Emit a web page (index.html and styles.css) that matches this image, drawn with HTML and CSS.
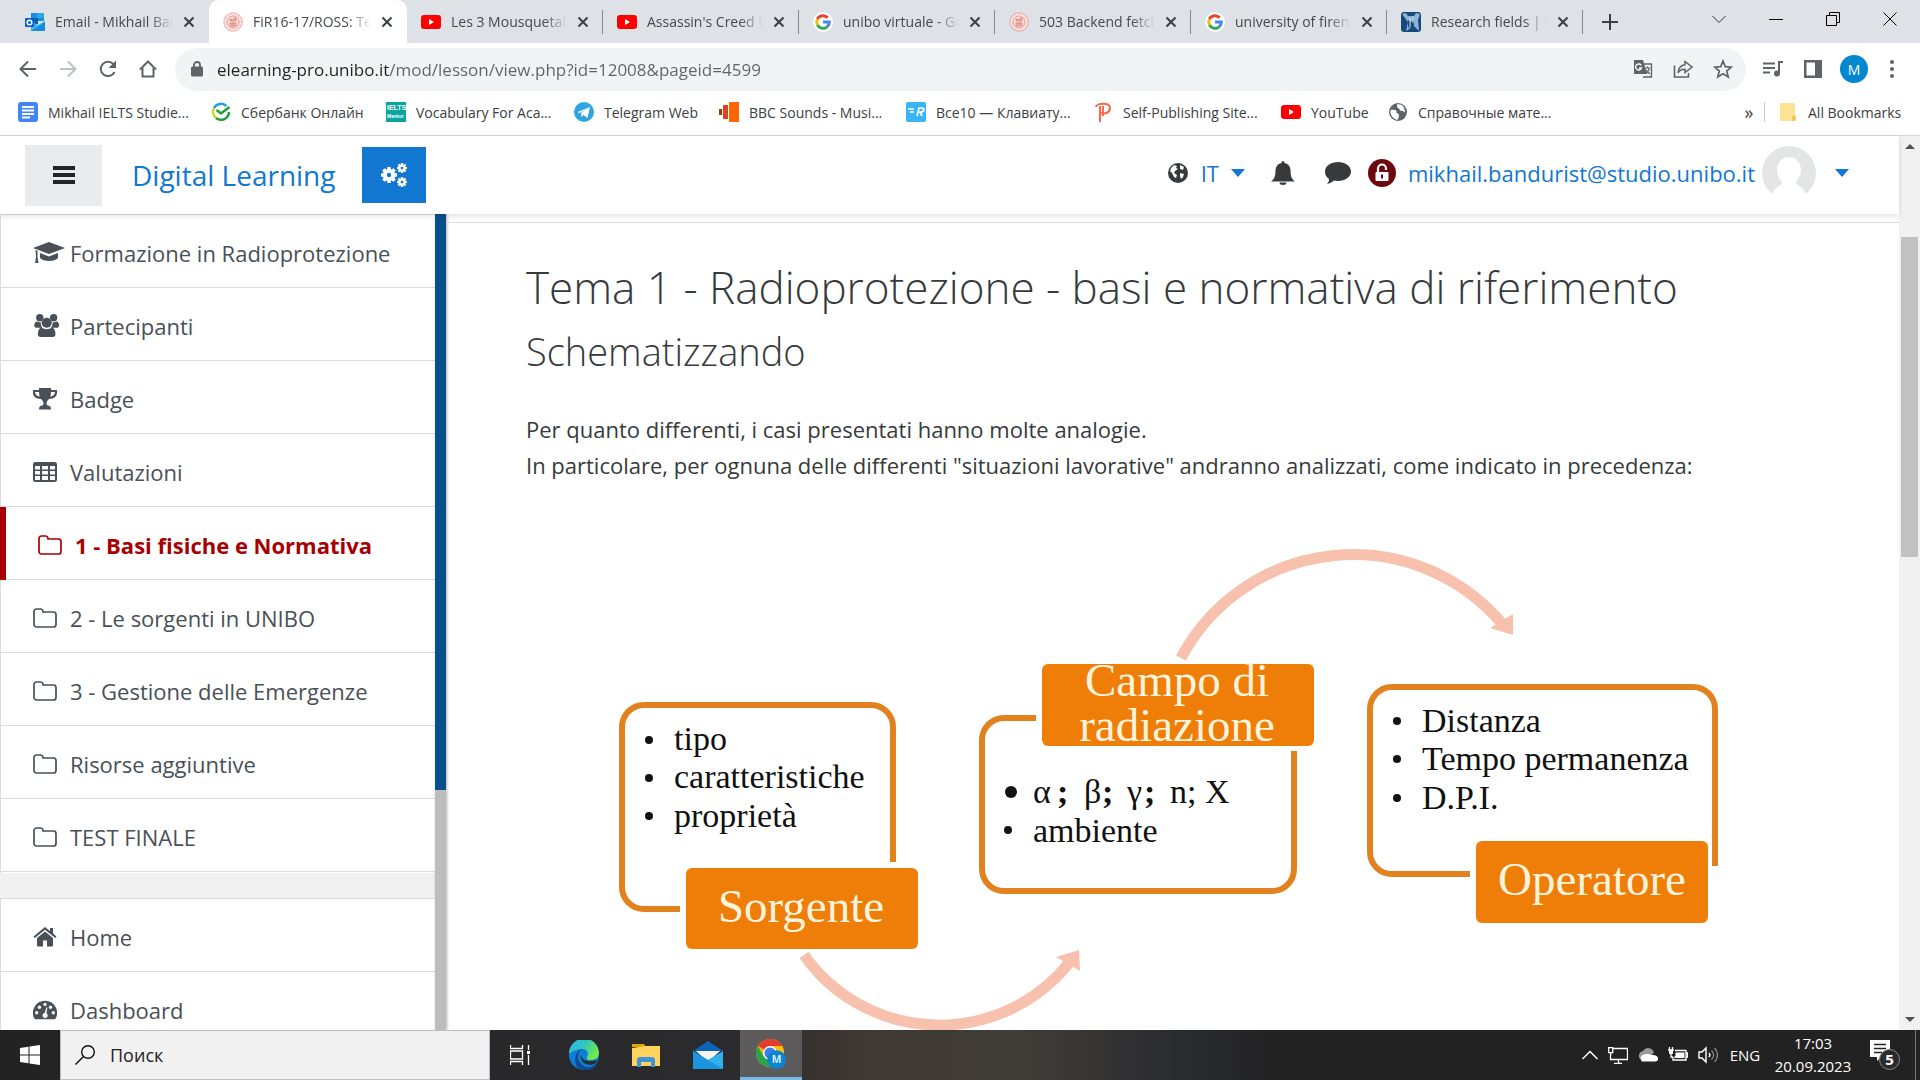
FILE: index.html
```html
<!DOCTYPE html>
<html lang="it">
<head>
<meta charset="utf-8">
<title>FiR16-17/ROSS: Tema 1</title>
<link rel="stylesheet" href="styles.css">
</head>
<body>
<svg class="defs" aria-hidden="true">
  <symbol id="x" viewBox="0 0 12 12"><path d="M1.500 1.500l9 9M10.500 1.500l-9 9" stroke="#3c4043" stroke-width="2" fill="none"/></symbol>
  <symbol id="youtube" viewBox="0 0 20 20"><rect y="3" width="20" height="14" rx="3" fill="#f00"/><path d="M8 7l5 3-5 3z" fill="#fff"/></symbol>
  <symbol id="google" viewBox="0 0 20 20"><circle cx="10" cy="10" r="10" fill="#fff"/><g fill="none" stroke-width="3"><path d="M14.700 5.800A6.300 6.300 0 0 0 4.400 7.200" stroke="#ea4335"/><path d="M4.400 7.200a6.300 6.300 0 0 0 0 5.600" stroke="#fbbc05"/><path d="M4.400 12.800a6.300 6.300 0 0 0 9.800 2" stroke="#34a853"/><path d="M10 10h6.300a6.300 6.300 0 0 1-2.100 4.800" stroke="#4285f4"/></g></symbol>
  <symbol id="seal" viewBox="0 0 20 20"><circle cx="10" cy="10" r="9" fill="#fbe3e0" stroke="#eba9a2" stroke-width="1.500" stroke-dasharray="1.500 .7"/><circle cx="10" cy="10" r="6" fill="none" stroke="#e79a93"/><path d="M7 7h2v2H7zM11 6h2v3h-2zM7 11h6v3H7zM10 7v7" fill="#efb5b0" stroke="#de7e76" stroke-width=".8"/></symbol>
  <symbol id="folder" viewBox="0 0 24 20"><path d="M1 3.500A2.500 2.500 0 0 1 3.500 1h4A2.500 2.500 0 0 1 10 3.500V4h10.500A2.500 2.500 0 0 1 23 6.500v10a2.500 2.500 0 0 1-2.500 2.500h-17A2.500 2.500 0 0 1 1 16.500z" fill="none" stroke="currentColor" stroke-width="1.700"/></symbol>
  <symbol id="caret" viewBox="0 0 14 8"><path d="M0 0h14L7 8z" fill="currentColor"/></symbol>
  <symbol id="gear" viewBox="-10 -10 20 20"><circle r="5" fill="none" stroke="currentColor" stroke-width="4.500"/><g fill="currentColor"><path id="tooth" d="M-2-10h4l.7 4h-5.400zM-2 10h4l.7-4h-5.400z"/><use href="#tooth" transform="rotate(45)"/><use href="#tooth" transform="rotate(90)"/><use href="#tooth" transform="rotate(135)"/></g></symbol>
</svg>

<header class="browser">
  <div class="tabstrip">
    <div class="tabs">
      <div class="tab first"><svg class="fav" viewBox="0 0 20 20"><path d="M6 1h13v8H6z" fill="#1490df"/><path d="M12 1h7v5h-7z" fill="#28a8ea"/><path d="M6 6h7v6H6z" fill="#0f5ea8"/><path d="M6 19V9l7 4 7-4v10z" fill="#35b8f1"/><path d="M6 19l14-9v9z" fill="#1a8ad8"/><rect y="6" width="9" height="9" rx="1" fill="#0a62c0"/><circle cx="4.500" cy="10.500" r="2.300" fill="none" stroke="#fff" stroke-width="1.500"/></svg><span class="tab-title">Email - Mikhail Bandurist</span><button class="close" aria-label="Chiudi"><svg><use href="#x"/></svg></button></div>
      <div class="tab active"><svg class="fav"><use href="#seal"/></svg><span class="tab-title">FiR16-17/ROSS: Tema 1</span><button class="close" aria-label="Chiudi"><svg><use href="#x"/></svg></button></div>
      <div class="tab"><svg class="fav"><use href="#youtube"/></svg><span class="tab-title">Les 3 Mousquetaires</span><button class="close" aria-label="Chiudi"><svg><use href="#x"/></svg></button></div>
      <div class="tab"><svg class="fav"><use href="#youtube"/></svg><span class="tab-title">Assassin's Creed Unity</span><button class="close" aria-label="Chiudi"><svg><use href="#x"/></svg></button></div>
      <div class="tab"><svg class="fav"><use href="#google"/></svg><span class="tab-title">unibo virtuale - Google</span><button class="close" aria-label="Chiudi"><svg><use href="#x"/></svg></button></div>
      <div class="tab"><svg class="fav"><use href="#seal"/></svg><span class="tab-title">503 Backend fetch failed</span><button class="close" aria-label="Chiudi"><svg><use href="#x"/></svg></button></div>
      <div class="tab"><svg class="fav"><use href="#google"/></svg><span class="tab-title">university of firenze</span><button class="close" aria-label="Chiudi"><svg><use href="#x"/></svg></button></div>
      <div class="tab"><svg class="fav" viewBox="0 0 20 20"><rect width="20" height="20" rx="3" fill="#17497c"/><path d="M1 2l4-1 2 3h6l2-3 4 1-2 6 1 11-5-5-8 5 2-9z" fill="#8fb4d3"/><path d="M7 8l3 2 3-2v6l-3 2-3-1z" fill="#17497c"/><path d="M9 6v9M12 5v6" stroke="#d4e5f2"/></svg><span class="tab-title">Research fields | Research</span><button class="close" aria-label="Chiudi"><svg><use href="#x"/></svg></button></div>
    </div>
    <button class="newtab" aria-label="Nuova scheda"><svg viewBox="0 0 16 16"><path d="M8 0v16M0 8h16" stroke="#3c4043" stroke-width="2"/></svg></button>
    <div class="window-buttons">
      <button aria-label="Cerca schede"><svg viewBox="0 0 14 14"><path d="M.5 4L7 10.500 13.500 4" fill="none" stroke="#333"/></svg></button>
      <button aria-label="Riduci"><svg viewBox="0 0 14 14"><path d="M0 7.500h14" stroke="#000"/></svg></button>
      <button aria-label="Ripristina"><svg viewBox="0 0 14 14"><path d="M.5 3.500h10v10H.5zM3.500 3V.5h10v10H11" fill="none" stroke="#000"/></svg></button>
      <button aria-label="Chiudi finestra"><svg viewBox="0 0 14 14"><path d="M.5.5l13 13M13.500.5l-13 13" stroke="#000"/></svg></button>
    </div>
  </div>

  <div class="toolbar">
    <button class="nav" aria-label="Indietro"><svg viewBox="0 0 20 20"><path d="M18 10H3M10 2.500L2.500 10l7.500 7.500" fill="none" stroke="#5f6368" stroke-width="2"/></svg></button>
    <button class="nav" aria-label="Avanti"><svg viewBox="0 0 20 20"><path d="M2 10h15M10 2.500l7.500 7.500-7.500 7.500" fill="none" stroke="#bdc1c6" stroke-width="2"/></svg></button>
    <button class="nav" aria-label="Ricarica"><svg viewBox="0 0 20 20"><path d="M16.500 13A7.200 7.200 0 1 1 15.500 5.200" fill="none" stroke="#5f6368" stroke-width="2"/><path d="M18 1.500V9h-7.500z" fill="#5f6368"/></svg></button>
    <button class="nav" aria-label="Pagina iniziale"><svg viewBox="0 0 20 20"><path d="M2 10.500l8-8 8 8M4.500 9v8.500h11V9" fill="none" stroke="#5f6368" stroke-width="2"/></svg></button>
    <div class="omnibox">
      <svg class="lock" viewBox="0 0 12 16"><rect y="5.500" width="12" height="10" rx="1.500" fill="#5f6368"/><path d="M3 6V4a3 3 0 0 1 6 0v2" fill="none" stroke="#5f6368" stroke-width="1.800"/></svg>
      <input class="url" aria-label="Indirizzo" value="elearning-pro.unibo.it/mod/lesson/view.php?id=12008&amp;pageid=4599">
      <button class="omni-btn" aria-label="Traduci"><svg viewBox="0 0 20 20"><path d="M8 5h10.500v13H10" fill="none" stroke="#5f6368" stroke-width="1.300"/><path d="M1 1h9l4 14H1z" fill="#5f6368"/><path d="M8.300 6.500A3 3 0 1 0 8.500 9H6" fill="none" stroke="#fff" stroke-width="1.400"/><path d="M11.500 9h6M14.500 7.500V9M12.500 14.500c2-1 3.500-3 4-5.500M13 11l4 4" fill="none" stroke="#5f6368" stroke-width="1.200"/></svg></button>
      <button class="omni-btn" aria-label="Condividi"><svg viewBox="0 0 20 20"><path d="M1.500 6.500v11.500h14v-4" fill="none" stroke="#5f6368" stroke-width="1.600"/><path d="M12 2.500l7 5.500-7 5.500v-3.200c-3.500 0-5.500 1-7 3.500.5-4.500 3-7.500 7-8z" fill="none" stroke="#5f6368" stroke-width="1.500"/></svg></button>
      <button class="omni-btn" aria-label="Preferiti"><svg viewBox="0 0 20 20"><path d="M10 2l2.300 5.600 6 .5-4.600 3.900 1.500 5.900L10 14.700l-5.200 3.200L6.300 12 1.700 8.100l6-.5z" fill="none" stroke="#5f6368" stroke-width="1.700"/></svg></button>
    </div>
    <div class="actions">
      <button aria-label="Contenuti multimediali"><svg viewBox="0 0 20 20"><path d="M0 4.500h12M0 9h12M0 13.500h7" stroke="#5f6368" stroke-width="2"/><path d="M20 3h-4v11" fill="none" stroke="#5f6368" stroke-width="2"/><circle cx="14" cy="14.500" r="3" fill="#5f6368"/></svg></button>
      <button aria-label="Pannello laterale"><svg viewBox="0 0 20 20"><path d="M1 1h18v18H1zM3.500 3.500v13H12v-13z" fill="#5f6368" fill-rule="evenodd"/></svg></button>
      <button class="profile">M</button>
      <button aria-label="Menu"><svg viewBox="0 0 20 20" fill="#5f6368"><circle cx="10" cy="3" r="2"/><circle cx="10" cy="10" r="2"/><circle cx="10" cy="17" r="2"/></svg></button>
    </div>
  </div>

  <nav class="bookmarks">
    <a href="#"><svg viewBox="0 0 20 20"><rect width="20" height="20" rx="3" fill="#4285f4"/><path d="M4 5h12M4 8.500h12M4 12h12M4 15.500h8" stroke="#fff" stroke-width="1.800"/></svg>Mikhail IELTS Studie...</a>
    <a href="#"><svg viewBox="0 0 20 20"><g fill="none" stroke-width="2.500"><path d="M15.500 4A8 8 0 0 0 3 6" stroke="#1f9fe8"/><path d="M3 6a8 8 0 0 0 2 10" stroke="#b8dc26"/><path d="M5 16a8 8 0 0 0 13-6" stroke="#21a038"/></g><path d="M5.500 8l4.500 3.500L18.500 5" fill="none" stroke="#21a038" stroke-width="2.500"/></svg>Сбербанк Онлайн</a>
    <a href="#"><svg viewBox="0 0 20 20"><rect width="20" height="20" fill="#0ba5a0"/><text x="1" y="8" class="tiny">IELTS</text><text x="1" y="16" class="tiny small">Mentor</text></svg>Vocabulary For Aca...</a>
    <a href="#"><svg viewBox="0 0 20 20"><circle cx="10" cy="10" r="10" fill="#2ca5e0"/><path d="M3.500 10L16 5l-2.500 11-4-3-2 2-.5-4 6-4-7.500 4z" fill="#fff"/></svg>Telegram Web</a>
    <a href="#"><svg viewBox="0 0 20 20"><path d="M0 7h3v6H0z" fill="#a7391a"/><path d="M4 3h5v14H4z" fill="#d8481b"/><path d="M10 0h10v20H10z" fill="#ff6600"/></svg>BBC Sounds - Musi...</a>
    <a href="#"><svg viewBox="0 0 20 20"><rect width="20" height="20" rx="2" fill="#3ab3f7"/><path d="M2 7h6M4 10h4M11 14l2-8h3c3 0 2 4-1 4h-3M14 10l2 4" fill="none" stroke="#fff" stroke-width="1.700"/></svg>Все10 — Клавиату...</a>
    <a href="#"><svg viewBox="0 0 20 20"><path d="M3 5c0-4 14-5 14 1 0 5-5 6-9 5M7 4v16M10 4v10" fill="none" stroke="#f96849" stroke-width="2"/></svg>Self-Publishing Site...</a>
    <a href="#"><svg><use href="#youtube"/></svg>YouTube</a>
    <a href="#"><svg viewBox="0 0 20 20"><circle cx="10" cy="10" r="9" fill="#5f6368"/><path d="M2.500 8c4-1 7 0 6 3 3 0 3 4 1 7-4-1-8-5-7-10zM9 2.500c6-1 8 4 8 8-2-2-3-1-5-2 0-2-4-3-3-6z" fill="#fff"/></svg>Справочные мате...</a>
    <button class="more" aria-label="Altri preferiti">»</button>
    <a class="all" href="#"><svg viewBox="0 0 16 20"><path d="M0 3a2 2 0 0 1 2-2h11a2 2 0 0 1 2 2v10l1 2v3l-1 1H2a2 2 0 0 1-2-2z" fill="#fde293"/><path d="M12 19v-5l3-1 1 2v3l-1 1z" fill="#f0cb58"/></svg>All Bookmarks</a>
  </nav>
</header>

<div class="page">
  <div class="site">
    <header class="site-header">
      <button class="hamburger" aria-label="Menu laterale"><svg viewBox="0 0 22 18"><path d="M0 2h22M0 9h22M0 16h22" stroke="#212529" stroke-width="4"/></svg></button>
      <a class="brand" href="#">Digital Learning</a>
      <button class="settings" aria-label="Impostazioni"><svg viewBox="0 0 26 24"><use href="#gear" x="0" y="4" width="16" height="16"/><use href="#gear" x="16" y="0" width="10" height="10"/><use href="#gear" x="16" y="14" width="10" height="10"/></svg></button>
      <div class="user">
        <a class="lang" href="#"><svg class="globe" viewBox="0 0 20 20"><circle cx="10" cy="10" r="10" fill="#373a3c"/><path d="M3 5l3-3 3 1-1 2 2 1-3 2-1 2 3 2-1 3-2-1-2-4-2-2zM12 2l4 2-1 3-3-1zM12 10l4 1-1 3-2 2-1-3z" fill="#fff"/></svg>IT<svg class="caret"><use href="#caret"/></svg></a>
        <button class="bell" aria-label="Notifiche"><svg viewBox="0 0 24 24"><path d="M12 0c1 0 1.500 1 1.500 2 4 .8 6 4 6 7.500 0 6 1.500 9 4.500 11H0c3-2 4.500-5 4.500-11 0-3.500 2-6.700 6-7.500 0-1 .5-2 1.500-2zM8.500 21.500h7a3.500 2.500 0 0 1-7 0z" fill="#373a3c"/></svg></button>
        <button class="chat" aria-label="Messaggi"><svg viewBox="0 0 26 22"><path d="M13 0c7 0 13 4 13 9.500S20 19 13 19c-1.500 0-2.500 0-4-.4C7 20.500 4.500 21.500 2 22c1.500-1.500 2-3 2-5-2.500-1.700-4-4-4-7.500C0 4 6 0 13 0z" fill="#373a3c"/></svg></button>
        <svg class="unlock" viewBox="0 0 28 28"><circle cx="14" cy="14" r="14" fill="#6e0a0d"/><rect x="7.500" y="13" width="13" height="9" rx="1" fill="#fff"/><path d="M10 13V9.500a4 4 0 0 1 8 0V11" fill="none" stroke="#fff" stroke-width="2.200"/><path d="M14 15.500v4" stroke="#6e0a0d" stroke-width="2"/></svg>
        <a class="account" href="#">mikhail.bandurist@studio.unibo.it<svg class="avatar" viewBox="0 0 54 54"><circle cx="27" cy="27" r="27" fill="#e4e5e7"/><path d="M27 11c7 0 12 6 12 13 0 6-3 9-5 12 0 4 7 4 10 12v6H10v-6c3-8 10-8 10-12-2-3-5-6-5-12 0-7 5-13 12-13z" fill="#fff"/></svg><svg class="caret"><use href="#caret"/></svg></a>
      </div>
    </header>
    <div class="columns">
      <nav class="drawer">
        <ul class="menu">
          <li><a href="#"><svg class="ico wide" viewBox="0 0 32 22"><path d="M16 0l16 6-16 6L0 6zM7 11l9 3.500 9-3.500v5c-3 4-15 4-18 0zM2.500 8l2 .7V15l1 6H2l1-6z" fill="currentColor"/></svg>Formazione in Radioprotezione</a></li>
          <li><a href="#"><svg class="ico wide" viewBox="0 0 32 26" fill="currentColor"><circle cx="6" cy="4" r="4"/><circle cx="21" cy="4" r="4"/><circle cx="13.500" cy="9.500" r="5.500"/><path d="M0 13c0-4 2-5 3-5 2 1 3 1 4 1 0 3 1 5 2 6H1.500zM27 13c0-4-2-5-3-5-2 1-3 1-4 1 0 3-1 5-2 6h7.500zM4 22c0-5 2-7 4-7 3 2 8 2 11 0 2 0 4 2 4 7 0 2-1 3-3 3H7c-2 0-3-1-3-3z"/></svg>Partecipanti</a></li>
          <li><a href="#"><svg class="ico" viewBox="0 0 24 22"><path d="M6 0h12v2h6v3c0 3-3 6-8 6-2 2-2.500 3-2.500 4.500 0 1.500 1 2 3 2.500 1 .5 1.500 1.500 1.500 3.500H6c0-2 .5-3 1.500-3.500 2-.5 3-1 3-2.500S10 13 8 11C3 11 0 8 0 5V2h6zM2 4c0 2 1.500 4 4.500 4.800L6 4zM22 4h-4l-.5 4.800C20.500 8 22 6 22 4z" fill="currentColor" fill-rule="evenodd"/></svg>Badge</a></li>
          <li><a href="#"><svg class="ico" viewBox="0 0 24 20"><path d="M2.500 0h19A2.500 2.500 0 0 1 24 2.500v15a2.500 2.500 0 0 1-2.500 2.500h-19A2.500 2.500 0 0 1 0 17.500v-15A2.500 2.500 0 0 1 2.500 0zM2 4v3.500h5V4zm7 0v3.500h6V4zm8 0v3.500h5V4zM2 9v3.500h5V9zm7 0v3.500h6V9zm8 0v3.500h5V9zM2 14v4h5v-4zm7 0v4h6v-4zm8 0v4h5v-4z" fill="currentColor" fill-rule="evenodd"/></svg>Valutazioni</a></li>
          <li class="current"><a href="#"><svg class="ico"><use href="#folder"/></svg>1 - Basi fisiche e Normativa</a></li>
          <li><a href="#"><svg class="ico"><use href="#folder"/></svg>2 - Le sorgenti in UNIBO</a></li>
          <li><a href="#"><svg class="ico"><use href="#folder"/></svg>3 - Gestione delle Emergenze</a></li>
          <li><a href="#"><svg class="ico"><use href="#folder"/></svg>Risorse aggiuntive</a></li>
          <li><a href="#"><svg class="ico"><use href="#folder"/></svg>TEST FINALE</a></li>
        </ul>
        <ul class="menu">
          <li><a href="#"><svg class="ico" viewBox="0 0 24 20"><path d="M12 4.500l8 6.500v7.500a1 1 0 0 1-1 1h-5v-6h-4v6H5a1 1 0 0 1-1-1V11zM12 0l5 4V1h3v5.500L23.500 9.500l-1.300 1.400L12 2.700 1.800 10.900.5 9.500z" fill="currentColor"/></svg>Home</a></li>
          <li><a href="#"><svg class="ico" viewBox="0 0 26 20"><path d="M13 0a13 13 0 0 1 11 20H2A13 13 0 0 1 13 0z" fill="currentColor"/><g fill="#fff"><circle cx="4" cy="13" r="1.800"/><circle cx="7" cy="7" r="1.800"/><circle cx="13" cy="4" r="1.800"/><circle cx="19" cy="7" r="1.800"/><circle cx="22" cy="13" r="1.800"/><path d="M14.500 7l1 .3-.9 6.200a2.800 2.800 0 1 1-1.800-.4z"/></g></svg>Dashboard</a></li>
        </ul>
      </nav>
      <div class="drawer-scroll"></div>
      <main class="content">
        <article class="lesson">
          <h1>Tema 1 - Radioprotezione - basi e normativa di riferimento</h1>
          <h2>Schematizzando</h2>
          <p>Per quanto differenti, i casi presentati hanno molte analogie.<br>In particolare, per ognuna delle differenti "situazioni lavorative" andranno analizzati, come indicato in precedenza:</p>
          <svg class="diagram" viewBox="526 500 1250 560" role="img" aria-label="Sorgente, campo di radiazione, operatore">
            <g class="frame">
              <path d="M893 862V727a22 22 0 0 0-22-22H644a22 22 0 0 0-22 22V887a22 22 0 0 0 22 22h36"/>
              <path d="M1036 718h-32a22 22 0 0 0-22 22V869a22 22 0 0 0 22 22h268a22 22 0 0 0 22-22V751"/>
              <path d="M1715 866V709a22 22 0 0 0-22-22H1392a22 22 0 0 0-22 22V852a22 22 0 0 0 22 22h78"/>
            </g>
            <g class="plate">
              <rect x="686" y="868" width="232" height="81" rx="6"/>
              <rect x="1042" y="664" width="272" height="82" rx="6"/>
              <rect x="1476" y="841" width="232" height="82" rx="6"/>
            </g>
            <g class="arrow">
              <path d="M804 955A166 166 0 0 0 1069 963"/>
              <path d="M1181 658A195 195 0 0 1 1504 626"/>
            </g>
            <g class="head"><path d="M1079 950l1 21-24-14zM1513 635l0-21-23 14z"/></g>
            <g class="label">
              <text x="801" y="922">Sorgente</text>
              <text x="1177" y="696">Campo di</text>
              <text x="1177" y="741">radiazione</text>
              <text x="1592" y="895">Operatore</text>
            </g>
            <g class="entry">
              <text x="674" y="750">tipo</text><text x="674" y="788">caratteristiche</text><text x="674" y="827">proprietà</text>
              <text y="803"><tspan x="1033">α</tspan><tspan x="1057" class="semi">;</tspan><tspan x="1084">β</tspan><tspan x="1102" class="semi">;</tspan><tspan x="1127">γ</tspan><tspan x="1144" class="semi">;</tspan><tspan x="1170">n;</tspan><tspan x="1205">X</tspan></text>
              <text x="1033" y="842">ambiente</text>
              <text x="1422" y="732">Distanza</text><text x="1422" y="770">Tempo permanenza</text><text x="1422" y="809">D.P.I.</text>
              <circle cx="649" cy="740" r="4"/><circle cx="649" cy="778" r="4"/><circle cx="649" cy="816" r="4"/>
              <circle cx="1011" cy="792" r="6"/><circle cx="1008" cy="830" r="4"/>
              <circle cx="1397" cy="721" r="4"/><circle cx="1397" cy="759" r="4"/><circle cx="1397" cy="798" r="4"/>
            </g>
          </svg>
        </article>
      </main>
    </div>
  </div>
  <div class="scrollbar"><span class="up"></span><span class="thumb"></span><span class="down"></span></div>
</div>

<footer class="taskbar">
  <button class="start" aria-label="Start"><svg viewBox="0 0 20 20" fill="#fff"><path d="M0 3l8.500-1.200v7.700H0zM9.500 1.600L20 0v9.500H9.500zM0 10.500h8.500v7.700L0 17zM9.500 10.500H20V20L9.500 18.400z"/></svg></button>
  <label class="search"><svg viewBox="0 0 20 20"><circle cx="13" cy="7" r="6.300" fill="none" stroke="#111" stroke-width="1.400"/><path d="M8.500 11.500L.5 19.500" stroke="#111" stroke-width="1.400"/></svg><input type="text" aria-label="Поиск" placeholder="Поиск"></label>
  <div class="apps">
    <button aria-label="Visualizzazione attività"><svg class="s20" viewBox="0 0 20 20"><path d="M.5 0v3.500h12V0M.5 6h12v8H.5zM.5 20v-3.500h12V20M18.500 0v5M18.500 10v10" fill="none" stroke="#fff" stroke-width="1.300"/><path d="M17 6h3v3h-3z" fill="#fff"/></svg></button>
    <button aria-label="Edge"><svg viewBox="0 0 30 30"><defs><linearGradient id="eg" x1="0" y1="0" x2="1" y2=".5"><stop offset="0" stop-color="#2fb5ee"/><stop offset=".5" stop-color="#2ec5c0"/><stop offset="1" stop-color="#70e850"/></linearGradient></defs><circle cx="15" cy="15" r="15" fill="#0d7fd6"/><path d="M0 14A15 15 0 0 1 30 13c0 5-4 7-8 7-3 0-5-1-4-3 2-3 1-8-5-8-5 0-10 2-13 5z" fill="url(#eg)"/><path d="M13 9c-7 6-4 15 4 18 4 1 8-1 11-4-3 9-14 9-20 4C4 19 7 11 13 9z" fill="#104a91"/><path d="M12 14c0 6 6 9 16 6l-1 3c-8 5-17-1-15-9z" fill="#2a2a2e"/></svg></button>
    <button aria-label="Esplora file"><svg viewBox="0 0 30 30"><path d="M1 4h12l2 3H1z" fill="#e8a200"/><path d="M1 8l14-2h14v20H1z" fill="#ffd35c"/><path d="M6 27v-7a3 3 0 0 1 3-3h12a3 3 0 0 1 3 3v7h-4v-5H10v5z" fill="#3f95d6"/></svg></button>
    <button aria-label="Posta"><svg viewBox="0 0 30 30"><path d="M0 11L15 1l15 10z" fill="#0b64b8"/><path d="M3 11h24L15 22z" fill="#f4f4f4"/><path d="M0 11l15 9 15-9v18H0z" fill="#2fb2ee"/><path d="M0 11v18h30z" fill="#1c95e0"/><path d="M3 11h24l-12 8z" fill="#f4f4f4"/></svg></button>
    <button class="running" aria-label="Chrome"><svg viewBox="0 0 32 32"><circle cx="15" cy="15" r="15" fill="#fbbc05"/><path d="M15 15L2 7.500A15 15 0 0 1 28 7.500H15z" fill="#e33b2e"/><path d="M15 15l-7 3L2 7.500A15 15 0 0 0 15 30l6-12z" fill="#2ba24c"/><circle cx="15" cy="15" r="7.500" fill="#fff"/><circle cx="15" cy="15" r="6" fill="#3b7ded"/><circle cx="22" cy="22" r="10" fill="#0b84cf"/><text x="22" y="26" class="badge">M</text></svg></button>
  </div>
  <div class="tray">
    <svg class="s16" viewBox="0 0 16 16"><path d="M.5 12L8 4.500l7.500 7.500" fill="none" stroke="#fff" stroke-width="1.500"/></svg>
    <svg class="s20" viewBox="0 0 20 20"><path d="M5 3.500h14.500v11H2.500V9M10.500 14.500V18M6 18.300h8M.7 2.700h4v5h-4zM2.700 7.500v3" fill="none" stroke="#fff" stroke-width="1.300"/></svg>
    <svg class="s20" viewBox="0 0 20 20"><path d="M2 14a5 5 0 0 1 3-8 6 6 0 0 1 11 2l-8 5z" fill="#9a9a9a"/><path d="M4 16.500a4 4 0 0 1 0-6c5-3 9-1 11-.5 6 0 7 6 2 6.500z" fill="#fff"/></svg>
    <svg class="s20" viewBox="0 0 20 20"><path d="M7 5.500h11v9.500H5V12M18 8h1.500v4H18M0 5h6M1.500 5V2M4.500 5V2M3 9v3h2" fill="none" stroke="#fff" stroke-width="1.300"/><path d="M1 5h4v4H1zM7.500 7.500h9V13h-10V11h1z" fill="#fff"/></svg>
    <svg class="s20" viewBox="0 0 20 20"><path d="M1 7h3l4-4v14l-4-4H1zM11 8a3 3 0 0 1 0 4" fill="none" stroke="#fff" stroke-width="1.400"/><path d="M13.500 5.500c3 3 3 6 0 9M16.500 3c4 4 4 10 0 14" fill="none" stroke="#888" stroke-width="1.300"/></svg>
    <span class="ime">ENG</span>
    <time class="clock">17:03<br>20.09.2023</time>
    <button class="notes" aria-label="Notifiche"><svg viewBox="0 0 30 32"><path d="M0 1h20v17h-9l-4 4v-4H0z" fill="#fff"/><path d="M4 5.500h12M4 9.500h12M4 13.500h8" stroke="#222" stroke-width="1.300"/><circle cx="19.500" cy="20.500" r="10" fill="#2b2b2b" stroke="#8a8a8a"/><text x="19.500" y="26" class="count">5</text></svg></button>
  </div>
</footer>
</body>
</html>
```
FILE: styles.css
```css
* { box-sizing: border-box; }
html, body { height: 100%; }
body { margin: 0; display: flex; flex-direction: column; overflow: hidden; background: #fff; color: #373a3c; font-family: "Open Sans", "Noto Sans", sans-serif; }
button { margin: 0; padding: 0; border: 0; background: none; font: inherit; color: inherit; display: grid; place-items: center; }
a { color: inherit; text-decoration: none; }
svg { display: block; flex: none; }
input { border: 0; padding: 0; outline: 0; background: none; font: inherit; min-width: 0; }
.defs { position: absolute; width: 0; height: 0; }

/* browser chrome */
.browser { flex: none; border-bottom: 1px solid #d5d6d8; }
.tabstrip { display: flex; height: 43px; background: #dee1e6; }
.tabs { display: flex; }
.tab { display: flex; align-items: center; width: 196px; padding: 0 10px 0 14px; color: #45494d; font-size: 14px; background: linear-gradient(#85888d, #85888d) right center / 1px 24px no-repeat; }
.tab.first { width: 209px; padding-left: 25px; background: none; }
.tab.active { background: #fff; border-radius: 10px 10px 0 0; width: 198px; }
.fav { width: 20px; height: 20px; }
.tab-title { flex: 1; margin: 0 6px 0 10px; overflow: hidden; white-space: nowrap; mask-image: linear-gradient(to right, #000 80%, transparent); }
.close { width: 20px; height: 20px; }
.close svg { width: 12px; height: 12px; }
.newtab { width: 54px; }
.newtab svg { width: 16px; height: 16px; }
.window-buttons { display: flex; margin: 0 2px 0 auto; padding-bottom: 5px; }
.window-buttons button { width: 57px; }
.window-buttons svg { width: 14px; height: 14px; }

.toolbar { display: flex; align-items: center; height: 52px; padding: 0 12px 0 8px; }
.nav { width: 40px; height: 40px; }
.nav svg, .actions svg, .omni-btn svg { width: 20px; height: 20px; }
.omnibox { flex: 1; display: flex; align-items: center; height: 43px; margin-left: 7px; padding: 0 3px 0 16px; border-radius: 22px; background: #f1f3f4; }
.lock { width: 12px; height: 16px; }
.url { flex: 1; margin-left: 14px; font-size: 17px; color: transparent; background: linear-gradient(to right, #202124 172px, #5f6368 172px); background-clip: text; }
.omni-btn { width: 40px; height: 40px; }
.actions { display: flex; align-items: center; margin-left: 7px; }
.actions button { width: 40px; height: 40px; }
.actions button:last-child { width: 32px; margin-left: 8px; }
.actions .profile { width: 28px; height: 28px; margin-left: 7px; border-radius: 50%; background: #0288d1; color: #fff; font-size: 14px; }

.bookmarks { display: grid; grid-template-columns: 193px 175px 188px 145px 187px 187px 188px 107px 1fr 30px 156px; align-items: center; height: 40px; padding: 0 0 6px 18px; font-size: 14px; color: #3c4043; white-space: nowrap; }
.bookmarks a { display: flex; align-items: center; gap: 10px; }
.bookmarks svg { width: 20px; height: 20px; }
.bookmarks .all { border-left: 1px solid #c8cacd; padding-left: 15px; gap: 12px; }
.bookmarks .all svg { width: 16px; }
.more { font-size: 18px; }
.tiny { font: bold 7px "Liberation Sans", sans-serif; fill: #fff; }
.tiny.small { font-size: 5px; }

/* site */
.page { flex: 1; min-height: 0; display: flex; }
.site { flex: 1; min-width: 0; display: flex; flex-direction: column; }
.site-header { flex: none; position: relative; display: flex; align-items: center; height: 78px; padding: 0 50px 0 25px; background: #fff; box-shadow: 0 2px 5px rgba(0, 0, 0, .12); font-size: 22px; color: #1177d1; }
.hamburger { width: 77px; height: 61px; background: #e9ecef; }
.hamburger svg { width: 22px; height: 18px; }
.brand { width: 229px; margin-left: 30px; font-size: 28px; }
.settings { width: 64px; height: 56px; margin-left: 1px; background: #1177d1; color: #fff; }
.settings svg { width: 26px; height: 24px; }
.user { display: flex; align-items: center; margin-left: auto; padding-bottom: 4px; }
.lang, .account { display: flex; align-items: center; }
.globe { width: 20px; height: 20px; margin-right: 13px; }
.caret { width: 14px; height: 8px; margin-left: 12px; }
.bell { margin-left: 26px; }
.bell svg { width: 24px; height: 24px; }
.chat { margin-left: 30px; }
.chat svg { width: 26px; height: 22px; }
.unlock { width: 28px; height: 28px; margin: 0 12px 0 17px; }
.avatar { width: 54px; height: 54px; margin: 0 7px 0 7px; }

.columns { flex: 1; min-height: 0; display: flex; }
.drawer { width: 435px; flex: none; overflow: hidden; background: #f1f1f1; }
.menu { list-style: none; margin: 0 0 25px; padding: 0 0 1px; border-left: 1px solid #dcdcdc; border-top: 1px solid #dcdcdc; background: #fff; color: #495057; font-size: 22px; }
.menu a { display: flex; align-items: center; height: 73px; padding: 3px 0 0 32px; border-bottom: 1px solid #dcdcdc; white-space: nowrap; }
.ico { width: 24px; height: 22px; margin-right: 13px; }
.ico.wide { width: 32px; height: 24px; margin-right: 5px; }
.current { margin-left: -1px; color: #a80000; font-weight: 700; border-left: 6px solid #a80000; }
.drawer-scroll { width: 11px; flex: none; background: linear-gradient(#0b4f8a 576px, #bdbdbd 576px); box-shadow: 1px 0 3px rgba(0, 0, 0, .3); }
.content { flex: 1; min-width: 0; overflow: hidden; padding: 8px 0 0; }
.lesson { border-top: 1px solid #dcdcdc; padding: 34px 80px 0; }
h1, h2, p { margin: 0; white-space: nowrap; }
h1 { font-size: 44px; line-height: 60px; font-weight: 300; }
h2 { margin-top: 6px; font-size: 38px; line-height: 56px; font-weight: 300; }
p { margin-top: 32px; font-size: 22px; line-height: 36px; }
.diagram { width: 1250px; height: 560px; margin-top: 17px; }
.frame path { fill: none; stroke: #e2821f; stroke-width: 6; }
.plate rect { fill: #ef7e08; }
.arrow path { fill: none; stroke: #f7c1ae; stroke-width: 11; }
.head path { fill: #f7c1ae; }
.label { font: 47px "Liberation Serif", serif; fill: #fff3dc; text-anchor: middle; }
.entry { font: 34px "Liberation Serif", serif; fill: #111; }
.semi { font-weight: 700; }

.scrollbar { width: 21px; flex: none; display: flex; flex-direction: column; align-items: center; padding: 8px 0; background: #f1f1f1; }
.thumb { width: 17px; height: 320px; margin-top: 88px; background: #c1c1c1; }
.up, .down { border: 5px solid transparent; }
.up { border-top: 0; border-bottom-color: #505050; }
.down { margin-top: auto; border-bottom: 0; border-top-color: #505050; }

/* taskbar */
.taskbar { flex: none; display: flex; height: 50px; background: linear-gradient(to right, #232323 0, #2b2b2e 740px, #3f3732 860px, #403d37 1020px, #2a2b30 1180px, #222 1280px); color: #fff; }
.start { width: 60px; }
.start svg, .s20, .search svg { width: 20px; height: 20px; }
.s16 { width: 16px; height: 16px; }
.search { display: flex; align-items: center; gap: 15px; width: 430px; padding-left: 14px; background: #f1f1f1; border: 1px solid #bdbdbd; font-size: 18px; }
.search input { flex: 1; }
.search input::placeholder { color: #222; opacity: 1; }
.apps { display: flex; }
.apps button { width: 62px; padding-right: 2px; }
.apps button:first-child { width: 64px; padding-right: 4px; }
.apps svg { width: 30px; height: 30px; }
.apps .s20 { width: 20px; height: 20px; }
.apps .running { padding-right: 0; background: #5c5a5a; border-bottom: 3px solid #76b9ed; }
.badge { font: bold 11px "Open Sans", sans-serif; fill: #d6ecfb; text-anchor: middle; }
.tray { display: flex; align-items: center; gap: 10px; margin-left: auto; font-size: 15px; padding-right: 4px; }
.ime { width: 34px; text-align: center; }
.clock { width: 82px; margin-right: 6px; text-align: center; line-height: 23px; }
.notes { width: 46px; height: 50px; border-right: 1px solid #777; justify-items: start; }
.notes svg { width: 30px; height: 32px; }
.count { font: bold 15px "Open Sans", sans-serif; fill: #fff; text-anchor: middle; }
```
